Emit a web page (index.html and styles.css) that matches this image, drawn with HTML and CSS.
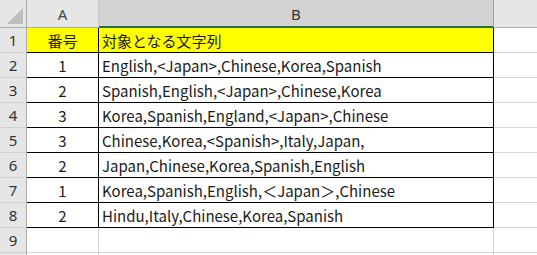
FILE: index.html
```html
<!DOCTYPE html>
<html lang="ja">
<head>
<meta charset="utf-8">
<link rel="stylesheet" href="styles.css">
</head>
<body>
<div class="sheet">
  <div class="corner"><span class="tri"></span></div>
  <div class="colhead">A</div>
  <div class="colhead sel">B</div>
  <div class="colhead rest"></div>

  <div class="rowhead">1</div>
  <div class="cell a hdr">番号</div>
  <div class="cell b hdr">対象となる文字列</div>
  <div class="cell c"></div>

  <div class="rowhead">2</div>
  <div class="cell a">1</div>
  <div class="cell b">English,&lt;Japan&gt;,Chinese,Korea,Spanish</div>
  <div class="cell c"></div>

  <div class="rowhead">3</div>
  <div class="cell a">2</div>
  <div class="cell b">Spanish,English,&lt;Japan&gt;,Chinese,Korea</div>
  <div class="cell c"></div>

  <div class="rowhead">4</div>
  <div class="cell a">3</div>
  <div class="cell b">Korea,Spanish,England,&lt;Japan&gt;,Chinese</div>
  <div class="cell c"></div>

  <div class="rowhead">5</div>
  <div class="cell a">3</div>
  <div class="cell b">Chinese,Korea,&lt;Spanish&gt;,Italy,Japan,</div>
  <div class="cell c"></div>

  <div class="rowhead">6</div>
  <div class="cell a">2</div>
  <div class="cell b">Japan,Chinese,Korea,Spanish,English</div>
  <div class="cell c"></div>

  <div class="rowhead">7</div>
  <div class="cell a">1</div>
  <div class="cell b">Korea,Spanish,English,＜Japan＞,Chinese</div>
  <div class="cell c"></div>

  <div class="rowhead">8</div>
  <div class="cell a">2</div>
  <div class="cell b">Hindu,Italy,Chinese,Korea,Spanish</div>
  <div class="cell c"></div>

  <div class="rowhead">9</div>
  <div class="cell empty"></div>
  <div class="cell empty"></div>
  <div class="cell c"></div>

  <div class="rowhead"></div>
  <div class="cell empty"></div>
  <div class="cell empty"></div>
  <div class="cell c"></div>
</div>
</body>
</html>
```

FILE: styles.css
```css
html, body {
  margin: 0;
  padding: 0;
  background: #ffffff;
  overflow: hidden;
}

.sheet {
  display: grid;
  grid-template-columns: 27px 72px 395px 1fr;
  grid-template-rows: 28px repeat(10, 25px);
  width: 537px;
  height: 255px;
  overflow: hidden;
  font-family: "Noto Sans CJK JP", "Noto Sans", sans-serif;
  font-size: 15px;
  color: #000;
}

.corner {
  position: relative;
  background: #e6e6e6;
  border-right: 1px solid #ababab;
  border-bottom: 1px solid #ababab;
}

.tri {
  position: absolute;
  right: 3px;
  bottom: 3px;
  width: 0;
  height: 0;
  border-left: 16px solid transparent;
  border-bottom: 16px solid #bdbdbd;
}

.colhead {
  background: #e6e6e6;
  border-right: 1px solid #c6c6c6;
  border-bottom: 1px solid #ababab;
  display: flex;
  align-items: center;
  justify-content: center;
  color: #444;
  font-family: "Noto Sans", sans-serif;
  font-size: 15px;
  padding-top: 1px;
  box-sizing: border-box;
}

.colhead.sel {
  background: #d2d2d2;
  border-right: 1px solid #9e9e9e;
  border-bottom: 2px solid #217346;
  color: #333;
}

.colhead.rest {
  border-right: none;
}

.rowhead {
  background: #e6e6e6;
  border-right: 1px solid #ababab;
  border-bottom: 1px solid #d0d0d0;
  display: flex;
  align-items: center;
  justify-content: center;
  color: #333;
  font-family: "Noto Sans", sans-serif;
  font-size: 15px;
}

.cell {
  display: flex;
  align-items: center;
  border-right: 1px solid #000;
  border-bottom: 1px solid #000;
  white-space: nowrap;
  overflow: hidden;
  color: #1a1a1a;
}

.cell.a {
  justify-content: center;
}

.cell.b {
  padding-left: 3px;
}

.cell.hdr {
  background: #ffff00;
}

.cell.c,
.cell.empty {
  border-right: 1px solid #d4d4d4;
  border-bottom: 1px solid #d4d4d4;
}

.cell.c {
  border-right: none;
}
```
